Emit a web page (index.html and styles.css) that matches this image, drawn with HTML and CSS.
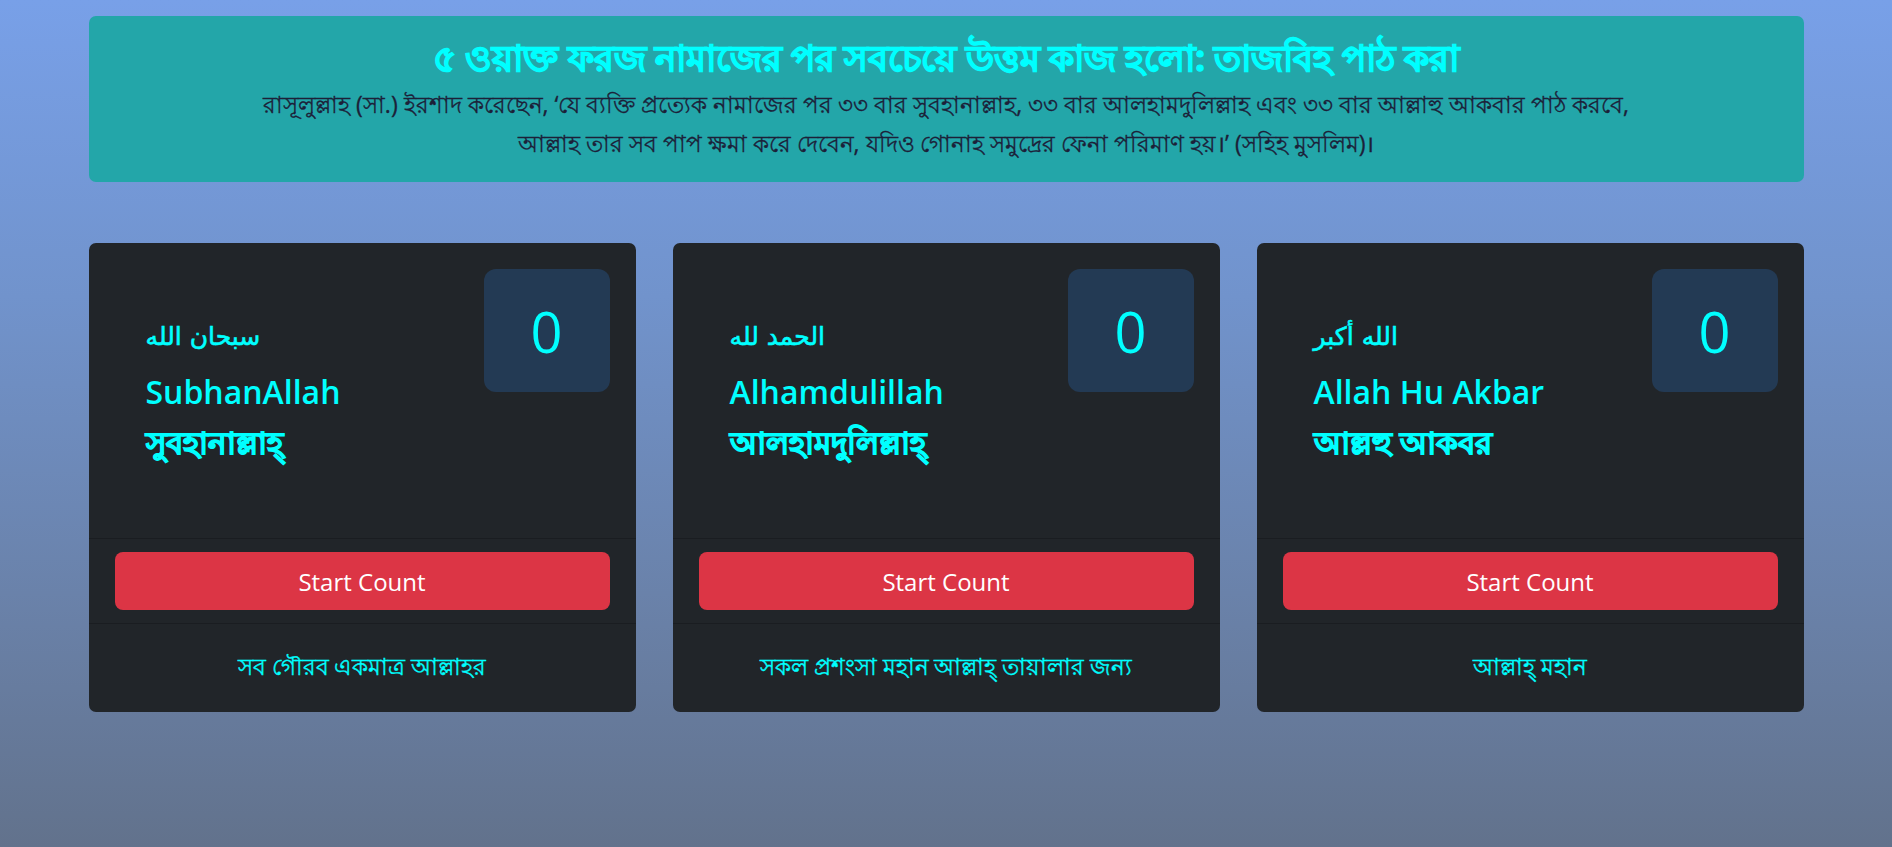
FILE: index.html
```html
<!DOCTYPE html>
<html lang="bn">
<head>
<meta charset="utf-8">
<title>Tasbih</title>
<link rel="stylesheet" href="styles.css">
</head>
<body>
<div class="page">
  <section class="banner">
    <h1 class="banner-title">৫ ওয়াক্ত ফরজ নামাজের পর সবচেয়ে উত্তম কাজ হলো: তাজবিহ পাঠ করা</h1>
    <p class="banner-text">রাসূলুল্লাহ (সা.) ইরশাদ করেছেন, ‘যে ব্যক্তি প্রত্যেক নামাজের পর ৩৩ বার সুবহানাল্লাহ, ৩৩ বার আলহামদুলিল্লাহ এবং ৩৩ বার আল্লাহু আকবার পাঠ করবে,<br>আল্লাহ তার সব পাপ ক্ষমা করে দেবেন, যদিও গোনাহ সমুদ্রের ফেনা পরিমাণ হয়।’ (সহিহ মুসলিম)।</p>
  </section>

  <div class="cards">
    <div class="card">
      <div class="card-body">
        <div class="names">
          <div class="arabic">سبحان الله</div>
          <div class="latin">SubhanAllah</div>
          <div class="bangla">সুবহানাল্লাহ্</div>
        </div>
        <div class="counter">0</div>
      </div>
      <div class="card-action"><button class="btn">Start Count</button></div>
      <div class="card-foot">সব গৌরব একমাত্র আল্লাহর</div>
    </div>

    <div class="card">
      <div class="card-body">
        <div class="names">
          <div class="arabic">الحمد لله</div>
          <div class="latin">Alhamdulillah</div>
          <div class="bangla">আলহামদুলিল্লাহ্</div>
        </div>
        <div class="counter">0</div>
      </div>
      <div class="card-action"><button class="btn">Start Count</button></div>
      <div class="card-foot">সকল প্রশংসা মহান আল্লাহ্ তায়ালার জন্য</div>
    </div>

    <div class="card">
      <div class="card-body">
        <div class="names">
          <div class="arabic">الله أكبر</div>
          <div class="latin">Allah Hu Akbar</div>
          <div class="bangla">আল্লহু আকবর</div>
        </div>
        <div class="counter">0</div>
      </div>
      <div class="card-action"><button class="btn">Start Count</button></div>
      <div class="card-foot">আল্লাহ্ মহান</div>
    </div>
  </div>
</div>
</body>
</html>
```

FILE: styles.css
```css
* { box-sizing: border-box; }

html, body {
  margin: 0;
  padding: 0;
}

body {
  min-height: 847px;
  background: linear-gradient(180deg, #78a0e8 0%, #7193cc 35%, #6a82aa 70%, #62728c 100%);
  font-family: "Open Sans", "Noto Sans", sans-serif;
  color: #212529;
}

.page {
  width: 1715px;
  margin: 0 auto;
  padding-top: 16px;
}

.banner {
  background: #23a6a9;
  border-radius: 7px;
  padding: 17px 20px 15px;
  text-align: center;
  height: 166px;
}

.banner-title {
  margin: 0;
  color: #00ffff;
  font-size: 35.5px;
  font-weight: 700;
  line-height: 48px;
  -webkit-text-stroke: 1.3px #00ffff;
}

.banner-text {
  margin: 4px 0 0;
  font-size: 23px;
  line-height: 39px;
  color: #1c2038;
  -webkit-text-stroke: 0.3px #1c2038;
}

.cards {
  margin-top: 61px;
  display: grid;
  grid-template-columns: repeat(3, 1fr);
  gap: 37px;
}

.card {
  background: #212529;
  border-radius: 7px;
  overflow: hidden;
  color: #00ffff;
}

.card-body {
  height: 295px;
  padding: 26px 26px 0 57px;
  display: flex;
  justify-content: space-between;
  align-items: flex-start;
}

.names {
  padding-top: 50px;
}

.arabic {
  font-family: "DejaVu Sans", sans-serif;
  font-size: 25px;
  font-weight: 400;
  line-height: 36px;
  -webkit-text-stroke: 0.6px #00ffff;
}

.latin {
  font-size: 32px;
  font-weight: 600;
  line-height: 50px;
  margin-top: 12px;
}

.bangla {
  font-size: 31px;
  font-weight: 700;
  line-height: 50px;
  margin-top: 0;
  -webkit-text-stroke: 1.2px #00ffff;
}

.counter {
  width: 126px;
  height: 123px;
  border-radius: 12px;
  background: #233a54;
  display: flex;
  align-items: center;
  justify-content: center;
  font-size: 56px;
  font-weight: 400;
  color: #00ffff;
}

.card-action {
  border-top: 1px solid #1a1d21;
  border-bottom: 1px solid #1a1d21;
  padding: 13px 26px;
}

.btn {
  display: block;
  width: 100%;
  height: 58px;
  border: 0;
  border-radius: 8px;
  background: #dc3545;
  color: #ffffff;
  font-family: "Open Sans", "Noto Sans", sans-serif;
  font-size: 24px;
  cursor: pointer;
}

.card-foot {
  height: 88px;
  display: flex;
  align-items: center;
  justify-content: center;
  font-size: 23px;
  color: #00ffff;
  -webkit-text-stroke: 0.4px #00ffff;
}
```
